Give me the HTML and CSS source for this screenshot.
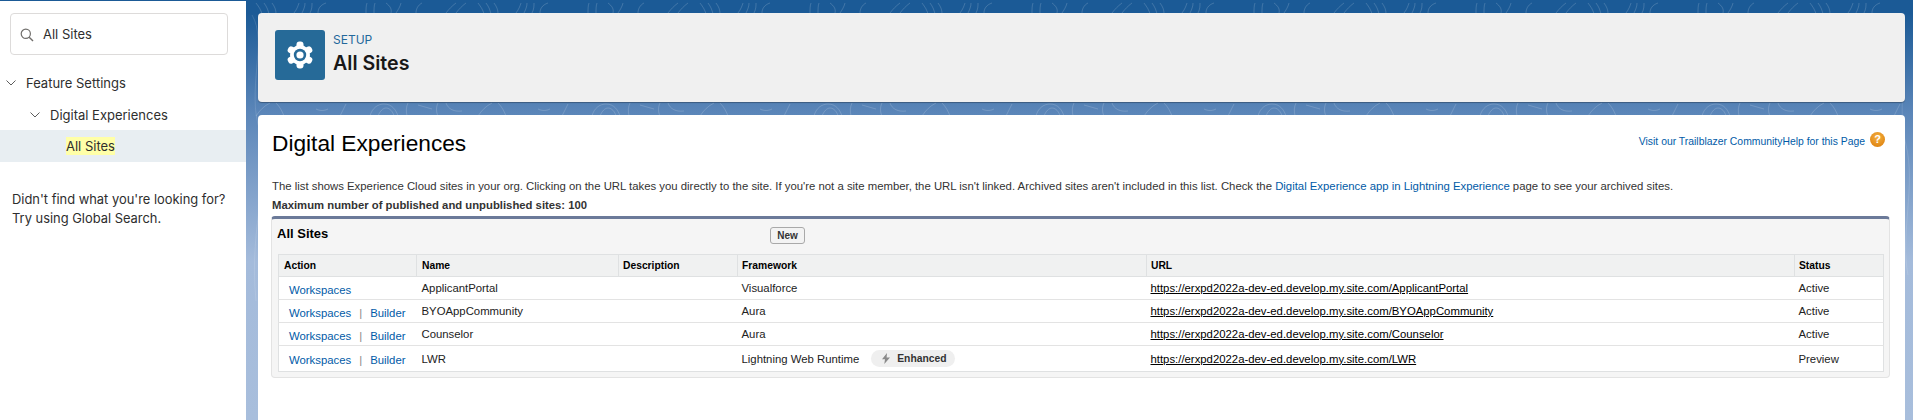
FILE: index.html
```html
<!DOCTYPE html>
<html lang="en">
<head>
<meta charset="utf-8">
<title>All Sites</title>
<link rel="stylesheet" href="styles.css">
</head>
<body>
<div class="app">
  <aside class="side">
    <div class="search">
      <svg class="search-ico" width="14" height="14" viewBox="0 0 14 14"><circle cx="5.800" cy="5.800" r="4.600" fill="none" stroke="#706e6b" stroke-width="1.200"/><path d="M9.200 9.200L13 13" stroke="#706e6b" stroke-width="1.400" fill="none"/></svg>
      <span>All Sites</span>
    </div>
    <div class="tree">
      <div class="node lvl1"><svg class="chev" width="10" height="6" viewBox="0 0 10 6"><path d="M.5.5L5 5 9.500.5" fill="none" stroke="#5c5c5c" stroke-width="1"/></svg><span>Feature Settings</span></div>
      <div class="node lvl2"><svg class="chev" width="10" height="6" viewBox="0 0 10 6"><path d="M.5.5L5 5 9.500.5" fill="none" stroke="#5c5c5c" stroke-width="1"/></svg><span>Digital Experiences</span></div>
      <div class="node lvl3"><mark>All Sites</mark></div>
    </div>
    <p class="hint">Didn't find what you're looking for?<br>Try using Global Search.</p>
  </aside>
  <main class="main">
    <svg class="contours" width="1667" height="420" fill="none" stroke="#fff" stroke-opacity=".16">
      <defs>
        <pattern id="tile" width="222" height="420" patternUnits="userSpaceOnUse">
          <path d="M10 2c3 4 5 7 6 11M18 2c3 4 4 7 5 11M26 2c3 4 4 7 4 11M48 12c3-4 4-7 5-10M56 12c2-4 3-7 3-10M64 12c2-4 2-7 2-10M72 12c0-4 2-8 8-10"/>
          <path d="M120 12c0-4 0-7 1-10M128 12c0-4 0-7 1-10M140 2c4 3 6 6 5 10M150 12c2-3 4-6 5-10M170 12c0-4 2-8 6-10"/>
          <path d="M200 12c3-4 6-7 10-10M210 12c3-4 6-7 10-10"/>
          <path d="M10 115c4-6 8-10 14-13M30 102c4 4 6 8 8 13M70 108c4 2 8 2 12 0M100 103c-2 4-4 8-6 12"/>
          <path d="M124 115c2-8 8-12 14-12 8 0 12 6 14 12M132 115c2-5 5-8 8-8 4 0 7 4 8 8M162 102c-2 4-2 8-1 13M172 104l14 4M192 102c-2 4-2 9 0 13M200 102c2 6 8 9 16 8"/>
        </pattern>
      </defs>
      <rect x="0" y="0" width="1667" height="420" fill="url(#tile)" stroke="none"/>
      <path d="M6 14C22 40 0 90 14 130S2 220 10 300" stroke-opacity=".12"/><path d="M1654 14c10 50-4 90 6 130s-6 90 2 130" stroke-opacity=".12"/>
    </svg>
    <section class="hero">
      <div class="hero-ico">
        <svg width="28" height="28" viewBox="0 0 28 28">
          <circle cx="14" cy="14" r="10" fill="#fff"/>
          <g fill="#fff">
            <rect x="10.500" y=".5" width="7" height="27" rx="3"/>
            <rect x="10.500" y=".5" width="7" height="27" rx="3" transform="rotate(60 14 14)"/>
            <rect x="10.500" y=".5" width="7" height="27" rx="3" transform="rotate(120 14 14)"/>
          </g>
          <circle cx="14" cy="14" r="6.200" fill="#266a98"/>
          <circle cx="14" cy="14" r="3.600" fill="#fff"/>
        </svg>
      </div>
      <div class="hero-text">
        <div class="eyebrow">SETUP</div>
        <h1>All Sites</h1>
      </div>
    </section>
    <section class="content">
      <div class="title-row">
        <h2>Digital Experiences</h2>
        <div class="help">
          <a href="#">Visit our Trailblazer Community</a><a href="#">Help for this Page</a>
          <span class="help-ico">?</span>
        </div>
      </div>
      <p class="intro">The list shows Experience Cloud sites in your org. Clicking on the URL takes you directly to the site. If you're not a site member, the URL isn't linked. Archived sites aren't included in this list. Check the <a href="#">Digital Experience app in Lightning Experience</a> page to see your archived sites.</p>
      <p class="max">Maximum number of published and unpublished sites: 100</p>
      <div class="block">
        <div class="block-head">
          <h3>All Sites</h3>
          <button class="btn" type="button">New</button>
        </div>
        <table class="list">
          <colgroup><col class="c-action"><col class="c-name"><col class="c-desc"><col class="c-fw"><col class="c-url"><col class="c-status"></colgroup>
          <thead><tr><th>Action</th><th>Name</th><th>Description</th><th>Framework</th><th>URL</th><th>Status</th></tr></thead>
          <tbody>
            <tr><td class="act"><a href="#">Workspaces</a></td><td>ApplicantPortal</td><td></td><td>Visualforce</td><td><a class="url" href="#">https://erxpd2022a-dev-ed.develop.my.site.com/ApplicantPortal</a></td><td>Active</td></tr>
            <tr><td class="act"><a href="#">Workspaces</a><span class="sep">|</span><a href="#">Builder</a></td><td>BYOAppCommunity</td><td></td><td>Aura</td><td><a class="url" href="#">https://erxpd2022a-dev-ed.develop.my.site.com/BYOAppCommunity</a></td><td>Active</td></tr>
            <tr><td class="act"><a href="#">Workspaces</a><span class="sep">|</span><a href="#">Builder</a></td><td>Counselor</td><td></td><td>Aura</td><td><a class="url" href="#">https://erxpd2022a-dev-ed.develop.my.site.com/Counselor</a></td><td>Active</td></tr>
            <tr class="tall"><td class="act"><a href="#">Workspaces</a><span class="sep">|</span><a href="#">Builder</a></td><td>LWR</td><td></td><td><span class="fw">Lightning Web Runtime<span class="pill"><svg width="8" height="11" viewBox="0 0 8 11"><path fill="#8a8a8a" d="M5 0L0 6.300h3L2.300 11 8 4.500H4.600z"/></svg>Enhanced</span></span></td><td><a class="url" href="#">https://erxpd2022a-dev-ed.develop.my.site.com/LWR</a></td><td>Preview</td></tr>
          </tbody>
        </table>
      </div>
    </section>
  </main>
</div>
</body>
</html>
```
FILE: styles.css
```css
* { box-sizing: border-box; }
html, body { margin: 0; height: 420px; overflow: hidden; }
body { font-family: "Liberation Sans", Arial, sans-serif; color: #181818; background: #fff; }
a { color: #015ba7; text-decoration: none; }

.app { display: flex; height: 420px; border-top: 1px solid #1b5a96; }

.side { width: 246px; flex: none; background: #fff; padding-top: 12px; font-family: Inter, "Liberation Sans", sans-serif; font-size: 13px; color: #2e2e2e; }
.search { margin: 0 18px 0 10px; height: 42px; border: 1px solid #dddbda; border-radius: 4px; display: flex; align-items: center; padding-left: 9px; gap: 9px; }
.search-ico { margin-top: 2px; flex: none; }
.tree { margin-top: 12px; }
.node { display: flex; align-items: center; height: 32px; }
.chev { flex: none; }
.lvl1 { padding-left: 6px; gap: 10px; }
.lvl2 { padding-left: 30px; gap: 10px; height: 31px; }
.lvl3 { padding-left: 66px; background: #e8eef2; }
mark { background: #ffffa8; color: inherit; padding: 1px 0; }
.hint { margin: 28px 0 0 12px; line-height: 19px; font-size: 12.900px; }

.main { flex: 1; position: relative; background: linear-gradient(#1b5a96 0, #1b5a96 12px, #5a85b8 110px, #a4bbdb 260px, #a8bedc 100%); padding: 12px 8px 0 12px; min-width: 0; }
.contours { position: absolute; left: 0; top: 0; }

.hero { position: relative; height: 89px; background: #f0f0f0; border-radius: 4px; box-shadow: 0 1px 1px rgba(0,0,0,.3); display: flex; align-items: flex-start; padding: 17px 0 0 17px; gap: 8px; font-family: Inter, "Liberation Sans", sans-serif; }
.hero-ico { width: 50px; height: 50px; background: #266a98; border-radius: 3px; display: flex; align-items: center; justify-content: center; }
.eyebrow { font-size: 12px; color: #23689b; line-height: 16px; margin-top: 2px; }
h1 { margin: 3px 0 0; font-size: 19.600px; line-height: 24px; font-weight: 600; color: #181818; }

.content { position: relative; margin-top: 13px; height: 305px; background: #fff; border-radius: 4px 4px 0 0; padding: 0 16px 0 14px; }
.title-row { display: flex; justify-content: space-between; height: 49px; align-items: flex-start; }
h2 { margin: 0; padding-top: 14px; font-size: 22.700px; line-height: 28px; font-weight: 400; color: #000; }
.help { display: flex; align-items: center; font-size: 10.400px; padding-top: 17px; margin-right: 4px; }
.help-ico { width: 15px; height: 15px; border-radius: 50%; margin: 0 0 3px 5px; background: radial-gradient(circle at 50% 35%, #f5b041, #d97a06); color: #fff; font-size: 11px; font-weight: 700; line-height: 15px; text-align: center; }

.intro { margin: 15px 0 0; font-size: 11.350px; line-height: 15px; color: #333; }
.max { margin: 4px 0 0; font-size: 11.300px; line-height: 15px; font-weight: 700; color: #333; }

.block { margin-top: 3px; width: 1619px; margin-left: -1px; height: 162px; background: #f5f5f5; border: 1px solid #e3e3e3; border-top: 3px solid #6b7a99; border-radius: 4px; padding: 0 6px; }
.block-head { height: 35px; display: flex; align-items: center; }
h3 { margin: 0; width: 493px; font-size: 13px; font-weight: 700; color: #000; margin-left: -1px; padding-bottom: 7px; }
.btn { width: 35px; height: 17px; padding: 0; border: 1px solid #a9a9a9; border-radius: 3px; background: #f3f3f3; font: 700 10px "Liberation Sans", Arial, sans-serif; color: #333; margin-bottom: 2px; }

.list { width: 1605px; table-layout: fixed; border-collapse: collapse; background: #fff; border: 1px solid #dfe1e2; font-size: 11.350px; color: #222; }
.c-action { width: 138px; } .c-name { width: 202px; } .c-desc { width: 119px; } .c-fw { width: 409px; } .c-url { width: 648px; } .c-status { width: 89px; }
th { height: 22px; padding: 0 4px 0 5px; text-align: left; font-size: 10.300px; font-weight: 700; background: #f0f1f1; color: #000; border-left: 1px solid #dfe1e2; border-bottom: 1px solid #dfe1e2; }
th:nth-child(n+3), td:nth-child(n+3) { padding-left: 4px; }
td { height: 23px; padding: 0 4px 0 5px; border-bottom: 1px solid #e3e3e3; white-space: nowrap; }
tr.tall td { height: 26px; border-bottom: 0; }
td.act { padding: 3px 0 0 10px; }
.sep { color: #888; margin: 0 8px; }
.url { color: #000; text-decoration: underline; }
.fw { display: flex; align-items: center; }
.pill { display: inline-flex; align-items: center; gap: 7px; height: 17px; margin-left: 12px; padding: 0 9px 0 11px; background: #efefef; border-radius: 9px; font-size: 10.300px; font-weight: 700; color: #333; }
```
